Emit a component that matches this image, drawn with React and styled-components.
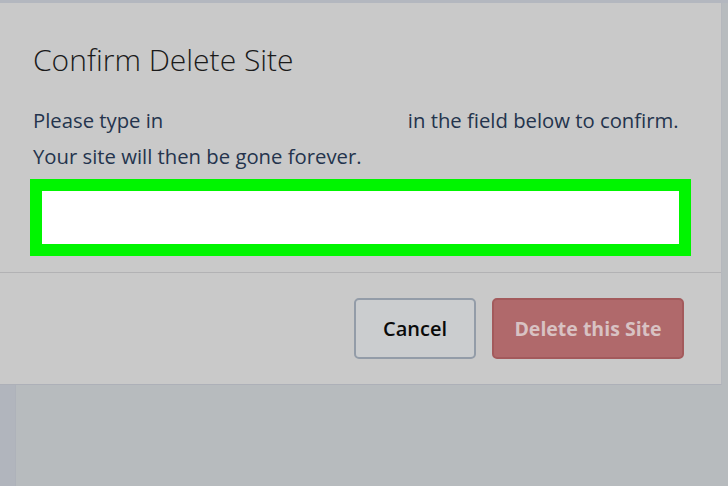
import React from "react";
import styled, { createGlobalStyle } from "styled-components";

const GlobalStyle = createGlobalStyle`
  html, body {
    margin: 0;
    padding: 0;
    width: 728px;
    height: 486px;
    overflow: hidden;
    background: #b7bbbe;
    font-family: "Open Sans", "Noto Sans", sans-serif;
  }
`;

const Page = styled.div`
  width: 728px;
  height: 486px;
  display: flex;
  flex-direction: column;
  background: #b7bbbe;
  border-top: 3px solid #b3b7bf;
  box-sizing: border-box;
`;

const Backdrop = styled.div`
  flex: 1;
  display: flex;
`;

const SideStripe = styled.div`
  width: 15px;
  background: #b1b5bd;
  border-right: 1px solid #aeb2ba;
`;

const Modal = styled.div`
  width: 722px;
  background: #c9c9c9;
  border-right: 1px solid #b4b7bd;
  border-bottom: 1px solid #adb0b8;
  box-sizing: border-box;
`;

const Body = styled.div`
  padding: 38px 30px 16px;
`;

const Title = styled.h2`
  margin: 0 0 23px 3px;
  font-size: 30px;
  font-weight: 300;
  color: #1a1a1a;
  line-height: 38px;
`;

const Text = styled.p`
  margin: 0 0 0 3px;
  font-size: 20.3px;
  line-height: 36px;
  color: #24344d;
  white-space: nowrap;
`;

const Hidden = styled.span`
  display: inline-block;
  width: ${(p) => p.w}px;
`;

const ConfirmInput = styled.div`
  margin-top: 5px;
  height: 53px;
  background: #ffffff;
  border: 12px solid #00f500;
`;

const Footer = styled.div`
  display: flex;
  justify-content: flex-end;
  gap: 16px;
  padding: 25px 37px 25px;
  border-top: 1px solid #b2b2b4;
`;

const Button = styled.button`
  height: 61px;
  width: ${(p) => p.w}px;
  border-radius: 5px;
  font-family: "Open Sans", "Noto Sans", sans-serif;
  font-size: ${(p) => (p.danger ? 19.5 : 20)}px;
  box-sizing: border-box;
  cursor: pointer;
  border: 2px solid ${(p) => (p.danger ? "#a35a5c" : "#939ca8")};
  background: ${(p) => (p.danger ? "#b0696b" : "#cbcdcf")};
  color: ${(p) => (p.danger ? "#d8c2c3" : "#0a0a0a")};
  font-weight: ${(p) => (p.danger ? 700 : 600)};
`;

export default function App() {
  return (
    <Page>
      <GlobalStyle />
      <Modal>
        <Body>
          <Title>Confirm Delete Site</Title>
          <Text>
            Please type in <Hidden w={234} /> in the field below to confirm.
          </Text>
          <Text>Your site will then be gone forever.</Text>
          <ConfirmInput />
        </Body>
        <Footer>
          <Button w={122}>Cancel</Button>
          <Button w={192} danger>
            Delete this Site
          </Button>
        </Footer>
      </Modal>
      <Backdrop>
        <SideStripe />
      </Backdrop>
    </Page>
  );
}
